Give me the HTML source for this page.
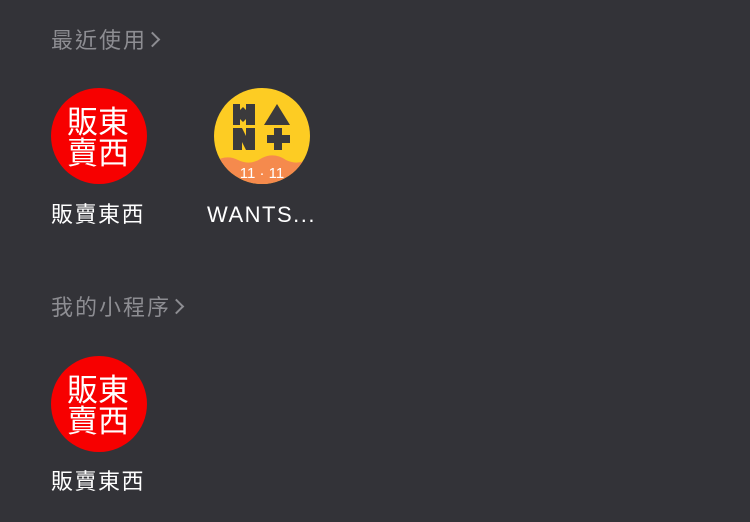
<!DOCTYPE html>
<html><head><meta charset="utf-8"><style>
body{margin:0;width:750px;height:522px;background:#333338;overflow:hidden;position:relative;font-family:"Liberation Sans","Noto Sans CJK TC",sans-serif}
.h{position:absolute;left:51px;color:#8d8d92;font-size:22px;line-height:24px;letter-spacing:2px}
.h i{display:inline-block;width:9px;height:9px;border-right:2px solid #8d8d92;border-top:2px solid #8d8d92;transform:rotate(45deg);margin-left:0px;vertical-align:3px}
.l{position:absolute;color:#fff;font-size:22px;line-height:24px;white-space:nowrap;letter-spacing:1.5px}
.red{position:absolute;width:96px;height:96px;border-radius:50%;background:#f70000}
.red span{position:absolute;color:#fff;font-size:31px;line-height:31px;font-family:"Noto Sans CJK TC",sans-serif;font-weight:400}
</style></head><body>
<div class="h" style="top:29px">最近使用<i></i></div>
<div class="red" style="left:51px;top:88px">
<span style="left:16px;top:16px">販東</span><span style="left:16px;top:47px">賣西</span></div>
<svg style="position:absolute;left:214px;top:88px" width="96" height="96" viewBox="0 0 96 96">
<defs><clipPath id="c"><circle cx="48" cy="48" r="48"/></clipPath></defs>
<g clip-path="url(#c)">
<rect width="96" height="96" fill="#fdcc23"/>
<path d="M0 74 Q12 66 24 72 Q36 78 48 70 Q60 64 72 72 Q84 78 96 70 V96 H0Z" fill="#f58a4d"/>
</g>
<g fill="#3b3a3c">
<path d="M19 16 H26 V22 L29 19 L32 22 V16 H41 V37 H32 V31 L29 34 L26 31 V37 H19Z"/>
<path d="M63 16 L76 37 H50Z"/>
<path d="M19 40 H28 L32 48 V40 H41 V62 H32 L28 54 V62 H19Z"/>
<path d="M60 40 H68 V47 H76 V55 H68 V62 H60 V55 H53 V47 H60Z"/>
</g>
<text x="48" y="90" fill="#fff" font-size="15" font-family="Liberation Sans" text-anchor="middle">11 · 11</text>
</svg>
<div class="l" style="left:51px;top:203px">販賣東西</div>
<div class="l" style="left:207px;top:203px">WANTS...</div>
<div class="h" style="top:296px">我的小程序<i></i></div>
<div class="red" style="left:51px;top:356px">
<span style="left:16px;top:16px">販東</span><span style="left:16px;top:47px">賣西</span></div>
<div class="l" style="left:51px;top:470px">販賣東西</div>
</body></html>
